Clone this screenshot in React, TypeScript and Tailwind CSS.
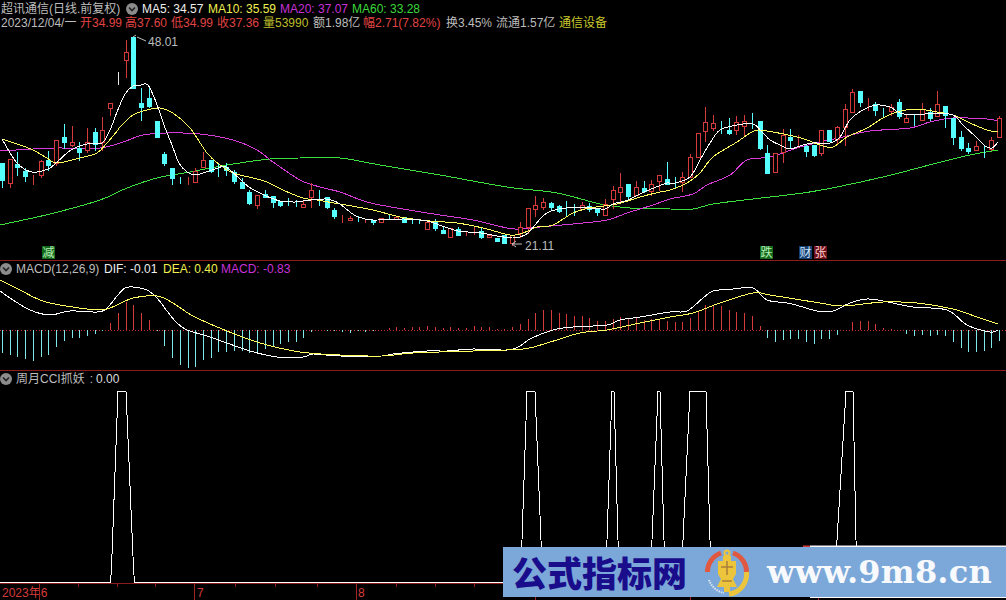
import React from "react";

// [index, kind (1 red, 0 cyan, 2 white), body top, body bottom, wick top, wick bottom]
const CANDLES: number[][] = [
  [0,0,163,180,163,187],[1,1,159,183,159,187],[2,0,164,167,152,175],[3,0,171,176,168,181],[4,1,175,175,175,184],
  [5,1,161,175,160,177],[6,0,160,165,151,170],[7,1,140,163,140,165],[8,0,137,142,124,148],[9,1,142,145,126,146],
  [10,0,148,152,142,160],[11,1,142,150,128,152],[12,0,132,144,128,150],[13,1,130,142,117,150],[14,1,103,108,103,115],
  [15,2,72,72,72,84],[16,1,52,60,40,77],[17,0,37,88,37,88],[18,0,103,107,88,120],[19,0,98,106,88,107],
  [20,0,121,137,121,137],[21,0,154,163,152,165],[22,0,168,178,168,184],[23,0,179,179,177,183],[24,1,180,180,177,184],
  [25,1,171,182,168,182],[26,1,160,167,152,167],[27,0,160,171,160,172],[28,0,172,172,163,176],[29,0,167,170,163,175],
  [30,0,172,181,170,183],[31,0,182,188,178,188],[32,0,192,203,190,204],[33,1,195,205,195,208],[34,0,194,197,190,197],
  [35,0,196,202,196,207],[36,0,201,205,201,206],[37,0,201,201,198,205],[38,0,203,203,200,206],[39,1,204,207,200,207],
  [40,1,190,197,183,207],[41,0,197,197,190,205],[42,0,197,207,197,208],[43,0,210,216,208,218],[44,1,219,219,215,222],
  [45,1,218,220,216,220],[46,0,217,217,216,221],[47,1,220,220,219,222],[48,0,220,222,220,224],[49,1,218,222,218,222],
  [50,0,217,217,215,219],[51,1,217,219,216,219],[52,0,217,222,217,222],[53,0,220,220,218,223],[54,0,221,221,219,223],
  [55,1,222,229,222,229],[56,0,222,228,219,230],[57,0,230,233,227,233],[58,1,228,237,228,237],[59,0,229,235,227,235],
  [60,1,233,233,231,235],[61,1,229,229,227,234],[62,0,231,237,228,238],[63,1,235,237,235,237],[64,0,238,241,238,241],
  [65,0,235,243,235,243],[66,1,235,243,235,245],[67,1,227,233,222,237],[68,1,208,227,208,233],[69,1,205,209,196,216],
  [70,1,202,207,198,209],[71,0,203,207,202,209],[72,0,206,211,205,212],[73,0,208,208,201,215],[74,0,208,208,204,215],
  [75,1,205,209,202,209],[76,0,206,209,203,211],[77,0,208,212,208,215],[78,1,204,215,199,215],[79,1,190,199,186,208],
  [80,1,187,192,173,202],[81,0,184,196,184,200],[82,1,187,195,181,195],[83,0,188,191,181,192],[84,1,184,191,180,195],
  [85,1,175,181,175,190],[86,0,179,184,162,184],[87,0,183,183,177,188],[88,1,177,182,172,191],[89,1,157,177,154,177],
  [90,1,133,157,133,157],[91,1,122,131,107,141],[92,1,123,128,115,130],[93,0,124,124,121,133],[94,0,130,133,118,134],
  [95,1,122,130,116,134],[96,1,121,126,115,135],[97,0,122,122,113,128],[98,0,121,148,121,149],[99,0,153,173,145,173],
  [100,1,153,172,153,172],[101,1,135,152,129,162],[102,0,137,140,129,147],[103,1,141,141,135,147],[104,0,146,151,144,156],
  [105,0,145,155,145,156],[106,1,130,153,130,155],[107,0,130,141,130,141],[108,1,127,139,126,143],[109,1,109,127,104,145],
  [110,1,92,112,89,112],[111,0,91,102,91,106],[112,1,105,105,98,110],[113,0,104,110,102,115],[114,0,111,111,108,116],
  [115,1,107,111,104,115],[116,0,102,116,99,118],[117,1,118,122,114,122],[118,0,118,118,115,125],[119,1,109,120,103,120],
  [120,0,112,118,108,120],[121,1,104,116,91,116],[122,0,106,115,106,127],[123,0,118,137,118,144],[124,0,137,148,131,150],
  [125,0,148,151,143,153],[126,1,146,150,141,150],[127,0,147,147,145,157],[128,1,140,149,137,150],[129,1,118,137,116,137],
];

const MA5 = "2,139 17,163 32,172 48,169 56,163 71,150 87,144 102,143 110,130 117,112 125,94 133,86 141,85 148,85 156,102 164,125 172,145 179,163 187,172 195,175 203,173 218,168 226,167 241,180 249,187 264,195 280,201 295,202 303,201 311,200 326,199 334,201 340,204 350,212 358,217 373,220 404,219 427,221 442,226 458,231 481,233 497,236 512,238 520,237 528,233 535,225 543,216 551,211 566,208 590,208 605,209 613,204 628,200 644,192 659,186 667,183 675,183 690,177 700,160 710,143 720,130 737,125 753,124 762,132 770,140 780,145 790,149 803,145 813,143 830,143 840,137 850,120 863,110 877,105 890,107 900,113 917,115 933,113 953,115 963,125 977,138 985,146 992,148 998,142";
const MA10 = "2,139 20,145 33,150 47,158 57,163 80,158 97,153 107,143 118,130 120,127 133,115 147,110 160,108 173,113 190,128 207,153 220,165 233,173 253,178 267,182 283,190 303,198 317,200 340,204 373,210 400,217 430,221 457,223 483,228 510,235 523,233 537,227 553,225 573,213 590,208 617,204 640,197 660,192 670,190 687,183 700,173 713,157 737,142 750,133 758,130 773,132 793,136 807,140 820,145 833,147 847,137 867,128 883,118 897,112 917,109 937,112 953,115 970,123 987,130 998,132";
const MA20 = "0,151 33,149 57,148 100,148 123,142 143,135 167,133 200,134 233,140 257,150 273,162 300,180 320,187 340,192 367,202 397,208 440,215 473,220 507,228 520,229 540,227 573,224 607,220 627,213 653,205 670,199 693,194 707,185 730,175 747,160 770,157 797,148 820,142 843,137 870,131 910,128 930,122 953,118 987,119 998,121";
const MA60 = "0,225 50,214 100,200 127,188 157,178 190,172 227,165 270,159 300,158 340,158 380,165 440,175 507,187 557,193 600,204 630,208 670,209 693,209 713,204 753,199 803,193 837,187 887,176 937,163 970,155 998,150";

// signed bar height per candle index, up is red
const MACD_BARS = [-23,-25,-27,-29,-31,-27,-25,-17,-11,-8,-8,-6,-4,-1,7,17,28,25,17,10,-1,-16,-28,-35,-38,-37,-30,-28,-22,-22,-21,-21,-23,-22,-19,-17,-14,-12,-12,-8,-2,0,-1,-1,-2,-3,-1,-2,-1,0,2,3,2,3,3,4,3,2,3,2,2,4,3,3,1,1,3,6,11,17,20,20,17,16,14,14,12,9,9,11,13,11,12,10,11,11,9,8,8,12,18,25,25,24,20,18,17,14,4,-8,-12,-10,-9,-9,-12,-14,-9,-9,-5,0,8,9,9,6,2,1,0,-4,-6,-5,-6,-5,-6,-12,-18,-22,-22,-21,-18,-11];
const DIF = "0,291 10,298 30,310 50,315 70,311 97,312 107,308 117,296 125,288 133,287 147,290 157,298 167,311 177,323 187,330 207,336 227,343 250,351 277,357 303,357 313,354 340,356 382,356 393,354 427,351 447,351 473,349 507,350 520,346 530,339 553,330 573,327 607,325 620,320 640,317 670,312 687,311 703,298 713,291 733,289 753,288 767,300 787,303 803,307 817,311 833,311 850,303 867,299 883,301 913,307 947,310 967,325 990,332 998,330";
const DEA = "0,280 20,290 40,300 60,305 100,310 117,305 133,298 157,296 173,303 193,316 227,331 260,343 300,352 340,355 382,356 413,353 473,351 523,349 547,343 580,333 607,330 640,323 670,317 693,313 720,303 753,293 770,295 820,303 843,306 883,302 917,303 953,309 977,317 998,324";

const SIGNAL = "0,582.5 110.5,582.5 111.5,568 118,391.5 126,391.5 133.5,568 134.5,582.5 521,582.5 522,540 527,391.5 535,391.5 541,540 542,582.5 606,582.5 607,540 612,391.5 614,391.5 618,540 619,582.5 651,582.5 652,540 658,391.5 660,391.5 664,540 665,582.5 682,582.5 683,540 690,391.5 706,391.5 710,540 711,582.5 836,582.5 837,540 846,391.5 853,391.5 856,540 857,582.5 1006,582.5";

const AXIS_TICKS = [78, 117, 155, 235, 275, 317, 396, 435, 474, 513];

const cx = (i: number) => Math.round(2 + 7.73 * i) + 0.5;

// catmull-rom through the sampled points, the curves are moving averages
const smooth = (pts: string) => {
  const p = pts.split(" ").map((s) => s.split(",").map(Number));
  let d = `M${p[0][0]} ${p[0][1]}`;
  for (let i = 0; i < p.length - 1; i++) {
    const a = p[Math.max(i - 1, 0)];
    const b = p[i];
    const c = p[i + 1];
    const e = p[Math.min(i + 2, p.length - 1)];
    d += `C${b[0] + (c[0] - a[0]) / 6} ${b[1] + (c[1] - a[1]) / 6} ${c[0] - (e[0] - b[0]) / 6} ${c[1] - (e[1] - b[1]) / 6} ${c[0]} ${c[1]}`;
  }
  return d;
};

const Curve = ({ points, color }: { points: string; color: string }) => (
  <path d={smooth(points)} fill="none" stroke={color} shapeRendering="crispEdges" />
);

const Candle = ({ c }: { c: number[] }) => {
  const [i, kind, top, bottom, wickTop, wickBottom] = c;
  const x = cx(i);
  const color = kind === 1 ? "#d63b3b" : kind === 0 ? "#55ffff" : "#e8e8e8";
  return (
    <g stroke={color} shapeRendering="crispEdges">
      <line x1={x} x2={x} y1={wickTop} y2={top} />
      <line x1={x} x2={x} y1={bottom} y2={wickBottom + 1} />
      <rect x={x - 2} y={top + 0.5} width={4} height={bottom - top} fill={kind === 1 ? "#000" : color} />
    </g>
  );
};

const Toggle = () => (
  <svg width="12" height="12" viewBox="0 0 12 12" className="shrink-0">
    <circle cx="6" cy="6" r="6" fill="#8c8c8c" />
    <path d="M3 4.5 6 7.5 9 4.5" fill="none" stroke="#222" strokeWidth="1.6" />
  </svg>
);

const Badge = ({ x, fill, color, text }: { x: number; fill: string; color: string; text: string }) => (
  <g>
    <rect x={x} y={246} width={13} height={13} fill={fill} />
    <text x={x + 0.5} y={257} fontSize="12" fill={color}>{text}</text>
  </g>
);

const App = () => {
  return (
    <div className="relative flex h-[600px] w-[1006px] flex-col overflow-hidden bg-black font-['Liberation_Sans','Noto_Sans_CJK_SC',sans-serif] text-[12px] leading-[14px] text-[#bdbdbd]">
      {/* kline */}
      <div className="relative h-[261px] shrink-0 border-b border-[#8c1c1c]">
        <svg viewBox="0 0 1006 260" className="block h-[260px] w-[1006px]">
          <Curve points={MA60} color="#3ce03c" />
          <Curve points={MA20} color="#d83cd8" />
          {CANDLES.map((c) => (
            <Candle key={c[0]} c={c} />
          ))}
          <Curve points={MA10} color="#ffff60" />
          <Curve points={MA5} color="#ffffff" />
          <path d="M133 37 136 35 M137 37 146 41" fill="none" stroke="#bdbdbd" />
          <text x="148" y="46" fontSize="12" fill="#bdbdbd">48.01</text>
          <path d="M522 244H512M516 241 512 244 516 247" fill="none" stroke="#bdbdbd" />
          <text x="525" y="250" fontSize="12" fill="#bdbdbd">21.11</text>
          <Badge x={42} fill="#14691a" color="#b8f0b8" text="减" />
          <Badge x={760} fill="#14691a" color="#b8f0b8" text="跌" />
          <Badge x={799} fill="#17406e" color="#d0e4ff" text="财" />
          <Badge x={814} fill="#6e0f1c" color="#ffd0d0" text="张" />
        </svg>
        <div className="absolute inset-x-0 top-0 flex flex-col pt-[2px]">
          <div className="flex h-[14px] items-center whitespace-nowrap">
            <span className="w-[126px] pl-px">超讯通信(日线.前复权)</span>
            <Toggle />
            <span className="ml-[4px] w-[66px] text-[#eeeeee]">MA5: 34.57</span>
            <span className="w-[72px] text-[#f0f050]">MA10: 35.59</span>
            <span className="w-[72px] text-[#c832d8]">MA20: 37.07</span>
            <span className="text-[#3cd83c]">MA60: 33.28</span>
          </div>
          <div className="flex h-[14px] items-center whitespace-nowrap">
            <span className="w-[80px] pl-px">2023/12/04/一</span>
            <span className="w-[45px] text-[#e04444]">开34.99</span>
            <span className="w-[46px] text-[#e04444]">高37.60</span>
            <span className="w-[46px] text-[#e04444]">低34.99</span>
            <span className="w-[46px] text-[#e04444]">收37.36</span>
            <span className="w-[50px] text-[#bcbc2c]">量53990</span>
            <span className="w-[50px]">额1.98亿</span>
            <span className="w-[83px] text-[#e04444]">幅2.71(7.82%)</span>
            <span className="w-[50px]">换3.45%</span>
            <span className="w-[63px]">流通1.57亿</span>
            <span className="text-[#c8c82c]">通信设备</span>
          </div>
        </div>
      </div>

      {/* macd */}
      <div className="relative h-[110px] shrink-0 border-b border-[#8c1c1c]">
        <svg viewBox="0 261 1006 109" className="block h-[109px] w-[1006px]">
          <line x1="0" x2="1006" y1="330.5" y2="330.5" stroke="#c23030" strokeDasharray="1 2" shapeRendering="crispEdges" />
          {MACD_BARS.map((h, i) =>
            h === 0 ? null : (
              <line
                key={i}
                x1={cx(i)}
                x2={cx(i)}
                y1={330}
                y2={330 - h}
                stroke={h > 0 ? "#d63b3b" : "#7fe8e8"}
                shapeRendering="crispEdges"
              />
            )
          )}
          <Curve points={DIF} color="#ffffff" />
          <Curve points={DEA} color="#ffff60" />
        </svg>
        <div className="absolute left-0 top-px flex h-[14px] items-center whitespace-nowrap">
          <Toggle />
          <span className="ml-[4px] w-[88px]">MACD(12,26,9)</span>
          <span className="w-[59px] text-[#eeeeee]">DIF: -0.01</span>
          <span className="w-[58px] text-[#f0f050]">DEA: 0.40</span>
          <span className="text-[#c832d8]">MACD: -0.83</span>
        </div>
      </div>

      {/* signal */}
      <div className="relative h-[212px] shrink-0">
        <svg viewBox="0 371 1006 212" className="block h-[212px] w-[1006px]">
          <polyline points={SIGNAL} fill="none" stroke="#ffffff" shapeRendering="crispEdges" />
          <path d="M803 546.5H810" stroke="#d63b3b" strokeWidth="2" />
          <path d="M810 546.5H1006" stroke="#f5f5f5" strokeWidth="2" />
        </svg>
        <div className="absolute left-0 top-px flex h-[14px] items-center whitespace-nowrap">
          <Toggle />
          <span className="ml-[4px]">周月CCI抓妖</span>
          <span className="ml-[5px]">:</span>
          <span className="ml-[3px] text-[#dddddd]">0.00</span>
        </div>
      </div>

      {/* date axis */}
      <div className="relative min-h-0 flex-1 border-t border-[#8c1c1c] text-[#d63b3b]">
        <div className="flex h-[16px] items-start whitespace-nowrap pt-[2px] pl-[2px]">
          <span className="w-[42px]">2023年6</span>
          <span className="ml-[152px] w-[161px] pl-[1px]">7</span>
          <span className="pl-[1px]">8</span>
        </div>
        <svg viewBox="0 584 1006 16" className="absolute inset-0 h-full w-full">
          {AXIS_TICKS.map((x) => (
            <line key={x} x1={x + 0.5} x2={x + 0.5} y1="584" y2="587" stroke="#8c1c1c" shapeRendering="crispEdges" />
          ))}
          {[39, 194, 356, 535, 690, 818].map((x) => (
            <line key={x} x1={x + 0.5} x2={x + 0.5} y1="584" y2="600" stroke="#a02424" shapeRendering="crispEdges" />
          ))}
        </svg>
      </div>

      {/* site watermark */}
      <div className="absolute bottom-[3px] right-0 flex h-[50px] w-[503px] items-center bg-[#7ba8d8]">
        <span className="ml-[9px] w-[188px] whitespace-nowrap font-['Noto_Sans_CJK_SC',sans-serif] text-[35px] leading-[50px] font-black text-[#1a0d8c]">公式指标网</span>
        <svg width="50" height="50" viewBox="0 0 50 50" className="ml-[2px] shrink-0">
          <path d="M5.5 25A20 20 0 0 1 19 6" fill="none" stroke="#e0583f" strokeWidth="5" />
          <path d="M31 6A20 20 0 0 1 44.5 25" fill="none" stroke="#e0583f" strokeWidth="5" />
          <path d="M44.5 25A20 20 0 0 1 27 47" fill="none" stroke="#ecc53c" strokeWidth="5" />
          <path d="M7 33A20 20 0 0 0 22 46" fill="none" stroke="#dfe7f2" strokeWidth="2" strokeDasharray="1.5 1" />
          <circle cx="25" cy="6" r="2.5" fill="none" stroke="#ecc53c" strokeWidth="2" />
          <path d="M21 9H29V14H34V27L31 32 35 40H28V45H22V40H15L19 32 16 27V14H21Z" fill="#ecc53c" />
          <path d="M19 20H31M25 14V28M20 34H30" stroke="#a9803a" strokeWidth="1.5" fill="none" />
        </svg>
        <span className="ml-[15px] whitespace-nowrap font-['DejaVu_Serif',serif] text-[32px] leading-[50px] font-bold tracking-[0.2px] text-[#f7f9fc]">www.9m8.cn</span>
      </div>
      <div className="absolute bottom-[2px] right-0 h-[1px] w-[196px] bg-white" />
    </div>
  );
};

export default App;
